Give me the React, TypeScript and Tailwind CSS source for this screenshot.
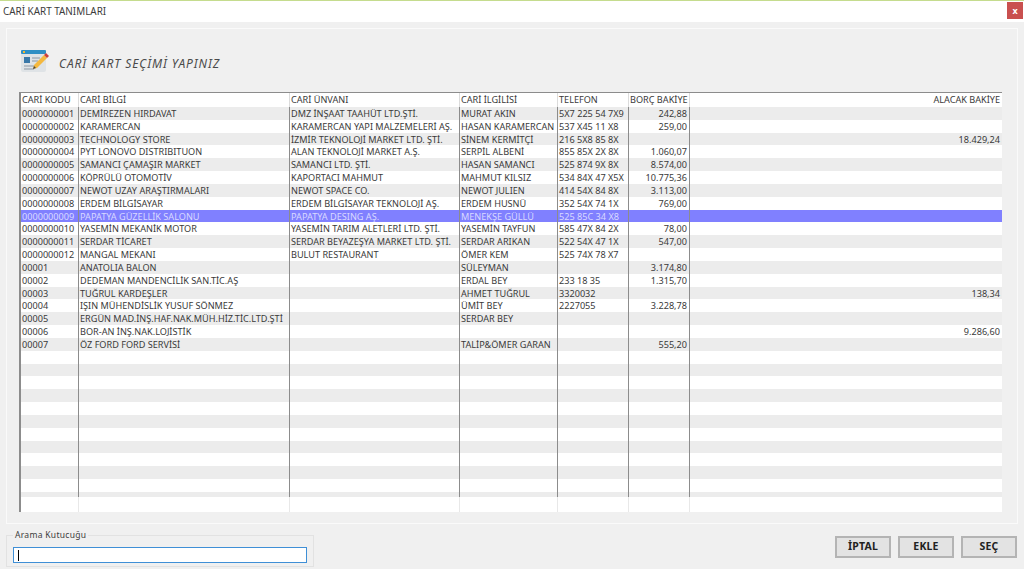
const font = { fontFamily: '"Noto Sans", "Liberation Sans", sans-serif' };

type Row = [string, string, string, string, string, string, string];

const rows: Row[] = [
  ["0000000001", "DEMİREZEN HIRDAVAT", "DMZ İNŞAAT TAAHÜT LTD.ŞTİ.", "MURAT AKIN", "5X7 225 54 7X9", "242,88", ""],
  ["0000000002", "KARAMERCAN", "KARAMERCAN YAPI MALZEMELERİ AŞ.", "HASAN KARAMERCAN", "537 X45 11 X8", "259,00", ""],
  ["0000000003", "TECHNOLOGY STORE", "İZMİR TEKNOLOJİ MARKET LTD. ŞTİ.", "SİNEM KERMİTÇİ", "216 5X8 85 8X", "", "18.429,24"],
  ["0000000004", "PYT LONOVO DISTRIBITUON", "ALAN TEKNOLOJİ MARKET A.Ş.", "SERPİL ALBENİ", "855 85X 2X 8X", "1.060,07", ""],
  ["0000000005", "SAMANCI ÇAMAŞIR MARKET", "SAMANCI LTD. ŞTİ.", "HASAN SAMANCI", "525 874 9X 8X", "8.574,00", ""],
  ["0000000006", "KÖPRÜLÜ OTOMOTİV", "KAPORTACI MAHMUT", "MAHMUT KILSIZ", "534 84X 47 X5X", "10.775,36", ""],
  ["0000000007", "NEWOT UZAY ARAŞTIRMALARI", "NEWOT SPACE CO.", "NEWOT JULIEN", "414 54X 84 8X", "3.113,00", ""],
  ["0000000008", "ERDEM BİLGİSAYAR", "ERDEM BİLGİSAYAR TEKNOLOJİ AŞ.", "ERDEM HUSNÜ", "352 54X 74 1X", "769,00", ""],
  ["0000000009", "PAPATYA GÜZELLİK SALONU", "PAPATYA DESING AŞ.", "MENEKŞE GÜLLÜ", "525 85C 34 X8", "", ""],
  ["0000000010", "YASEMİN MEKANİK MOTOR", "YASEMİN TARIM ALETLERİ LTD. ŞTİ.", "YASEMİN TAYFUN", "585 47X 84 2X", "78,00", ""],
  ["0000000011", "SERDAR TİCARET", "SERDAR BEYAZEŞYA MARKET LTD. ŞTİ.", "SERDAR ARIKAN", "522 54X 47 1X", "547,00", ""],
  ["0000000012", "MANGAL MEKANI", "BULUT RESTAURANT", "ÖMER KEM", "525 74X 78 X7", "", ""],
  ["00001", "ANATOLIA BALON", "", "SÜLEYMAN", "", "3.174,80", ""],
  ["00002", "DEDEMAN MANDENCİLİK SAN.TİC.AŞ", "", "ERDAL BEY", "233 18 35", "1.315,70", ""],
  ["00003", "TUĞRUL KARDEŞLER", "", "AHMET TUĞRUL", "3320032", "", "138,34"],
  ["00004", "IŞIN MÜHENDİSLİK YUSUF SÖNMEZ", "", "ÜMİT BEY", "2227055", "3.228,78", ""],
  ["00005", "ERGÜN MAD.İNŞ.HAF.NAK.MÜH.HİZ.TİC.LTD.ŞTİ", "", "SERDAR BEY", "", "", ""],
  ["00006", "BOR-AN İNŞ.NAK.LOJİSTİK", "", "", "", "", "9.286,60"],
  ["00007", "ÖZ FORD FORD SERVİSİ", "", "TALİP&ÖMER GARAN", "", "555,20", ""],
  ...Array.from({ length: 12 }, (): Row => ["", "", "", "", "", "", ""]),
];

const headers = ["CARİ KODU", "CARİ BİLGİ", "CARİ ÜNVANI", "CARİ İLGİLİSİ", "TELEFON", "BORÇ BAKİYE", "ALACAK BAKİYE"];

const cols = [
  "w-[58px]",
  "w-[211px]",
  "w-[170px]",
  "w-[98px]",
  "w-[71px]",
  "w-[61px]",
  "flex-1",
];

function CardIcon() {
  return (
    <svg width="30" height="26" viewBox="0 0 30 26">
      <rect x="1" y="1" width="25" height="22" rx="2" fill="#dfe3e6" />
      <rect x="1" y="1" width="25" height="4" rx="1" fill="#2f8fc4" />
      <rect x="3" y="2" width="2" height="2" fill="#f2b632" />
      <rect x="4" y="8" width="6" height="6" fill="#3a78a8" />
      <path d="M12 9h8M12 12h6M4 17h14M4 20h10" stroke="#8b98a3" strokeWidth="1.2" />
      <path d="M13 20l1-4 10-10 3 3-10 10z" fill="#f4b83f" />
      <path d="M24 6l2-2 3 3-2 2z" fill="#c9403c" />
      <path d="M13 20l1-3 2 2z" fill="#444" />
    </svg>
  );
}

function TableRow({ row, index }: { row: Row; index: number }) {
  const selected = index === 8;
  const bg = selected ? "bg-[#8080ff] text-[#d9d9ff]" : index % 2 === 0 ? "bg-[#ececec] text-[#3a3a3a]" : "bg-white text-[#3a3a3a]";
  return (
    <div className={`flex h-[12.83px] shrink-0 ${bg}`}>
      {row.map((cell, i) => (
        <div
          key={i}
          className={`${cols[i]} ${i === 6 ? "" : "shrink-0 border-r border-[#8c8c8c]"} ${i >= 5 ? "text-right pr-[2px]" : "pl-[1px]"} overflow-hidden whitespace-nowrap leading-[14.4px]`}
        >
          {cell}
        </div>
      ))}
    </div>
  );
}

function ActionButton({ label }: { label: string }) {
  return (
    <button className="w-[56px] h-[22px] bg-[#e3e3e3] border-2 border-[#b4b4b4] text-[10.5px] font-bold text-[#222] tracking-[0.2px]">
      {label}
    </button>
  );
}

export default function App() {
  return (
    <div className="w-[1024px] h-[569px] bg-[#f0f0f0] flex flex-col overflow-hidden text-[9.15px]" style={font}>
      <div className="h-[22px] shrink-0 bg-white border-t border-[#c5dc8e] flex items-center justify-between pl-[3px] pr-[1px]">
        <span className="text-[9.9px] text-[#3c3c3c]">CARİ KART TANIMLARI</span>
        <div className="w-[16px] h-[17px] bg-[#c9504f] text-white text-[9px] font-bold flex items-center justify-center leading-none mb-[2px]">x</div>
      </div>

      <div className="mx-[6px] mt-[6px] h-[496px] shrink-0 border border-[#fafafa] flex flex-col pl-[12px] pr-[15px]">
        <div className="h-[63px] shrink-0 flex items-end pb-[17px] gap-[9px] pl-[1px]">
          <CardIcon />
          <span className="italic text-[12px] text-[#4a4a4a] tracking-[0.9px] mb-[2px]">CARİ KART SEÇİMİ YAPINIZ</span>
        </div>
        <div className="h-[420px] border-l-2 border-t border-[#8c8c8c] bg-white flex flex-col overflow-hidden">
          <div className="flex h-[14px] shrink-0 bg-white text-[#3a3a3a]">
            {headers.map((h, i) => (
              <div
                key={h}
                className={`${cols[i]} ${i === 6 ? "text-right pr-[2px]" : "shrink-0 border-r border-[#dcdcdc] pl-[1px]"} leading-[14px] whitespace-nowrap overflow-hidden`}
              >
                {h}
              </div>
            ))}
          </div>
          <div className="h-[390px] shrink-0 flex flex-col overflow-hidden">
            {rows.map((row, i) => (
              <TableRow key={i} row={row} index={i} />
            ))}
          </div>
          <div className="flex-1 flex">
            {cols.map((c, i) => (
              <div key={i} className={`${c} ${i === 6 ? "" : "shrink-0 border-r border-[#e8e8e8]"}`} />
            ))}
          </div>
        </div>
      </div>

      <div className="flex-1 flex justify-between pl-[6px] pr-[7px] pt-[9px]">
        <div className="relative w-[308px] h-[32px] mt-[2px] border border-[#e2e2e2]">
          <span className="absolute left-[6px] top-[-7px] bg-[#f0f0f0] px-[2px] text-[8.5px] text-[#3c3c3c] tracking-[0.3px] leading-[12px]">Arama Kutucuğu</span>
          <div className="mt-[11px] mx-[6px] h-[16px] bg-white border border-[#3f8fd6] flex items-center pl-[4px]">
            <div className="w-px h-[11px] bg-black" />
          </div>
        </div>
        <div className="flex gap-[7px] mt-[3px]">
          <ActionButton label="İPTAL" />
          <ActionButton label="EKLE" />
          <ActionButton label="SEÇ" />
        </div>
      </div>
    </div>
  );
}
